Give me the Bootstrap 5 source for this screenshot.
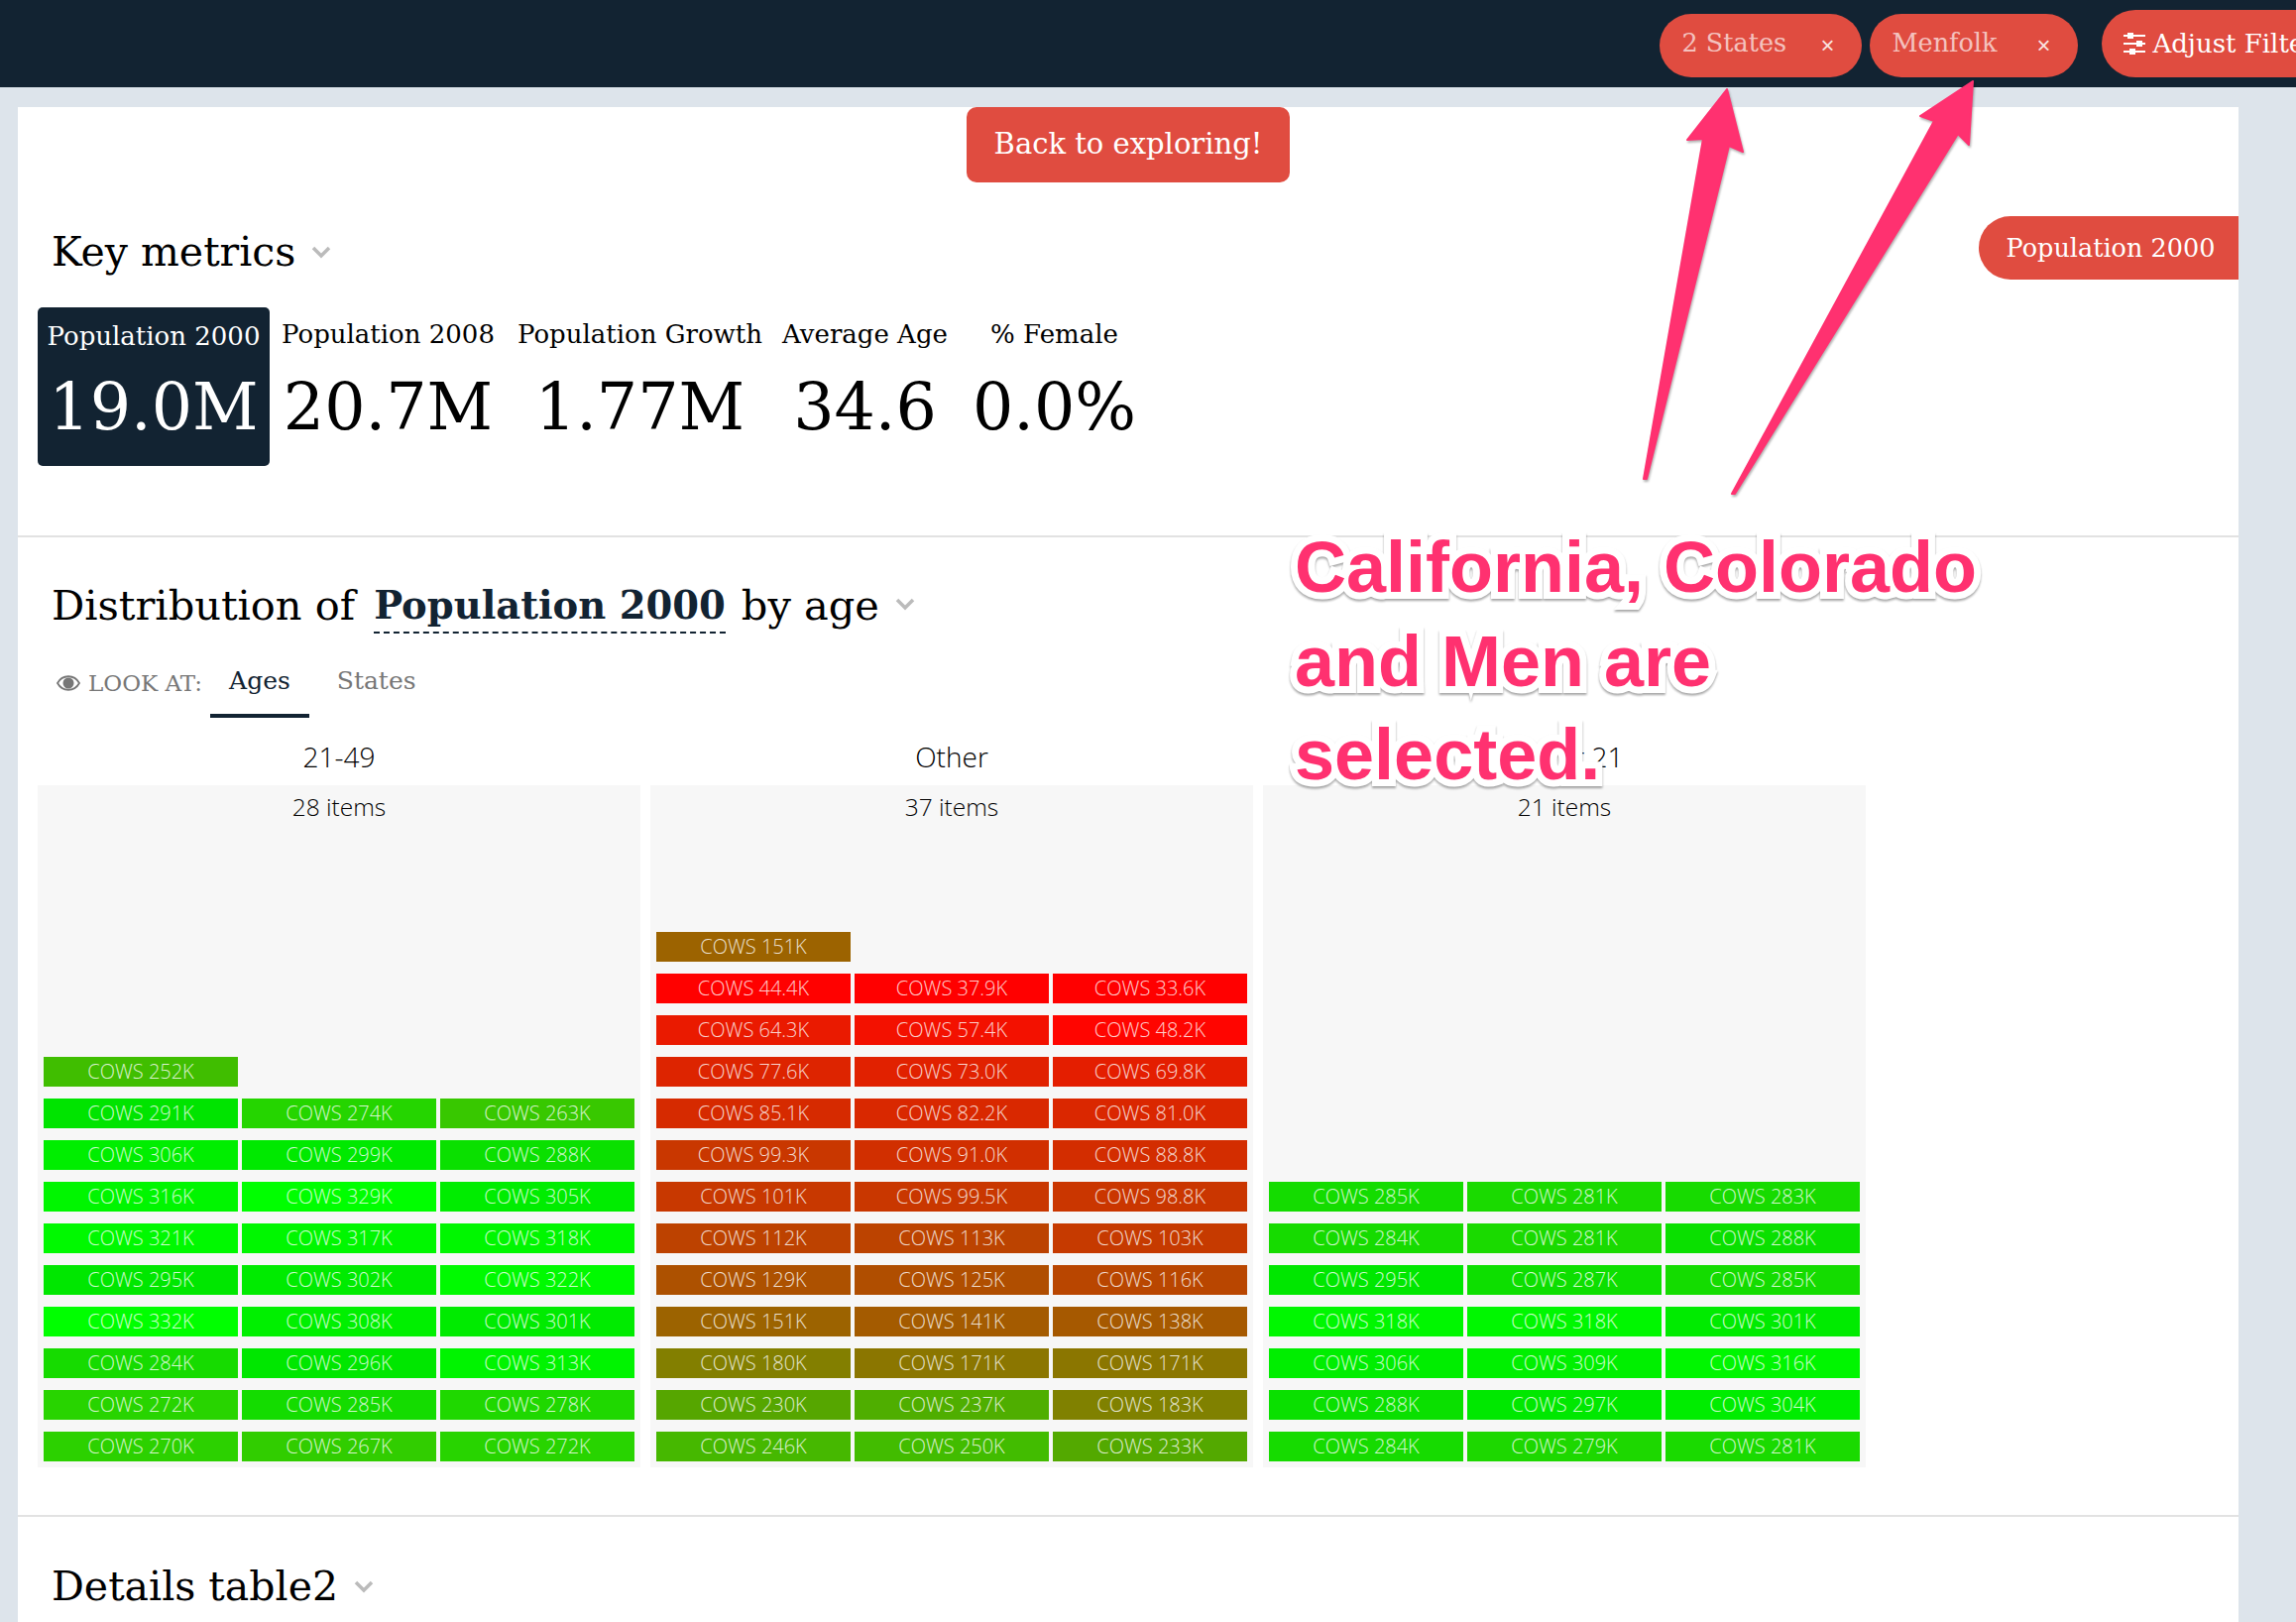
<!DOCTYPE html>
<html lang="en">
<head>
  <meta charset="UTF-8">
  <title>Population explorer</title>
  <link href="https://cdn.jsdelivr.net/npm/bootstrap@5.3.2/dist/css/bootstrap.min.css" rel="stylesheet">
  <style>
    html, body { height: 1636px; overflow: hidden; }
    body { background: #dde4eb; font-family: "DejaVu Serif", serif; color: #000; position: relative; }
    .top-bar { background: #122332; height: 88px; padding: 0; }
    .top-chips { margin-top: 14px; }
    .red-chip { background: #e04c40; color: #fff; border: 0; border-radius: 32px; font-size: 25.5px; height: 64px; padding-bottom: 6px; }
    .red-chip:hover { background: #e04c40; color: #fff; }
    .filter-chip { width: 204px; padding: 0 28px 6px 22px; color: rgba(255,255,255,.68); }
    .filter-chip.wide-chip { width: 210px; }
    .chip-x { font-family: "Liberation Sans", sans-serif; font-size: 24px; color: rgba(255,255,255,.85); padding-top: 6px; }
    .adjust-btn { height: 68px; margin: -4px -74px 0 16px; padding: 0 40px 0 21px; border-radius: 34px; white-space: nowrap; gap: 6px; font-size: 26px; }
    .sheet { background: #fff; margin: 20px 58px 0 18px; height: 1600px; }
    .back-btn { background: #e04c40; color: #fff; font-size: 29px; height: 76px; width: 326px; border-radius: 10px; border: 0; }
    .back-btn:hover { background: #e04c40; color: #fff; }
    .head-row { height: 64px; margin-top: 34px; padding-left: 34px; }
    .sec-title { font-size: 41px; font-weight: 400; margin: 0; line-height: 56px; padding-top: 8px; }
    .metric-pill { background: #e04c40; color: #fff; border-radius: 32px 0 0 32px; width: 262px; height: 64px; font-size: 25.5px; padding-left: 4px; }
    .metric-row { margin-top: 28px; padding-left: 20px; height: 160px; }
    .metric-tile { text-align: center; padding-top: 9px; white-space: nowrap; }
    .metric-tile.on { background: #122332; color: #fff; border-radius: 5px; padding-top: 11px; }
    .metric-tile.on .metric-num { margin-top: 16px; }
    .metric-tile:nth-child(1) { width: 234px; }
    .metric-tile:nth-child(2) { width: 239px; }
    .metric-tile:nth-child(3) { width: 269px; }
    .metric-tile:nth-child(4) { width: 185px; }
    .metric-tile:nth-child(5) { width: 197px; }
    .metric-name { font-size: 26px; line-height: 36px; }
    .metric-num { font-size: 65px; line-height: 76px; margin-top: 18px; }
    .sec-rule { height: 2px; background: #e2e2e2; margin-top: 70px; }
    .dist-head { height: 60px; margin-top: 37px; padding-left: 34px; font-size: 41.5px; line-height: 57px; }
    .dist-head span { padding-top: 3px; }
    .dist-measure { font-weight: 700; color: #122332; border-bottom: 2px dashed #122332; margin: 0 16px 0 19px; font-size: 38.5px; height: 60px; }
    .look-row { padding-left: 39px; height: 70px; margin-top: 15px; }
    .look-label { color: #777; font-size: 23px; gap: 8px; }
    .look-tabs { gap: 9px; }
    .look-tabs .nav-link { color: #777; font-size: 25px; padding: 0 19px; height: 70px; line-height: 66px; }
    .look-tabs .nav-link.active { color: #122332; border-bottom: 4px solid #122332; }
    .age-cols { padding-left: 20px; gap: 10px; margin-top: 19px; }
    .age-col { width: 608px; }
    .age-name { font-family: "Open Sans", sans-serif; font-weight: 300; font-size: 28px; text-align: center; height: 49px; line-height: 40px; }
    .age-panel { background: #f7f7f7; height: 688px; padding: 0 6px 6px; position: relative; }
    .item-count { font-family: "Open Sans", sans-serif; font-weight: 300; font-size: 24.5px; text-align: center; line-height: 44px; height: 44px; }
    .cow-row { gap: 4px; margin-top: 12px; }
    .cow-cell { width: 196px; height: 30px; line-height: 30px; text-align: center; color: rgba(255,255,255,.82); font-family: "Open Sans", sans-serif; font-weight: 300; font-size: 20px; white-space: nowrap; }
    .rule-two { margin-top: 48px; }
    .note-arrows { left: 0; top: 0; z-index: 10; filter: drop-shadow(1px 2px 1px rgba(0,0,0,.3)); }
    .note-text { left: 1306px; top: 525px; z-index: 11; font-family: "Liberation Sans", sans-serif; font-weight: 700; font-size: 72px; line-height: 94.5px; color: #ff3170; -webkit-text-stroke: 14px #fff; paint-order: stroke fill; filter: drop-shadow(0 2px 1px rgba(0,0,0,.35)); white-space: nowrap; }
  </style>
</head>
<body>
  <nav class="navbar top-bar d-flex justify-content-end align-items-start flex-nowrap">
    <div class="d-flex gap-2 align-items-start top-chips">
      <button class="btn red-chip filter-chip d-flex justify-content-between align-items-center" type="button"><span>2 States</span><span class="chip-x">×</span></button>
      <button class="btn red-chip filter-chip wide-chip d-flex justify-content-between align-items-center" type="button"><span>Menfolk</span><span class="chip-x">×</span></button>
      <button class="btn red-chip adjust-btn d-flex align-items-center" type="button">
        <svg width="24" height="22" viewBox="0 0 24 22"><g stroke="#fff" stroke-width="2"><path d="M1 3h22M1 11h22M1 19h22"/></g><g fill="#fff"><rect x="5" y="0" width="6" height="6"/><rect x="14" y="8" width="6" height="6"/><rect x="7" y="16" width="6" height="6"/></g></svg>
        <span>Adjust Filters</span>
      </button>
    </div>
  </nav>

  <main class="sheet">
    <div class="d-flex justify-content-center">
      <button class="btn back-btn" type="button">Back to exploring!</button>
    </div>

    <section>
      <div class="head-row d-flex justify-content-between align-items-center">
        <h2 class="sec-title d-flex align-items-center gap-3">Key metrics
          <svg width="20" height="13" viewBox="0 0 20 13"><path d="M2 2l8 8 8-8" fill="none" stroke="#bbb" stroke-width="3.5"/></svg>
        </h2>
        <div class="metric-pill d-flex align-items-center justify-content-center">Population 2000</div>
      </div>
      <div class="metric-row d-flex">
        <div class="metric-tile on"><div class="metric-name">Population 2000</div><div class="metric-num">19.0M</div></div>
        <div class="metric-tile"><div class="metric-name">Population 2008</div><div class="metric-num">20.7M</div></div>
        <div class="metric-tile"><div class="metric-name">Population Growth</div><div class="metric-num">1.77M</div></div>
        <div class="metric-tile"><div class="metric-name">Average Age</div><div class="metric-num">34.6</div></div>
        <div class="metric-tile"><div class="metric-name">% Female</div><div class="metric-num">0.0%</div></div>
      </div>
      <div class="sec-rule"></div>
    </section>

    <section>
      <div class="dist-head d-flex align-items-start">
        <span>Distribution of</span>
        <span class="dist-measure">Population 2000</span>
        <span>by age</span>
        <svg class="ms-3 mt-4" width="20" height="13" viewBox="0 0 20 13"><path d="M2 2l8 8 8-8" fill="none" stroke="#bbb" stroke-width="3.5"/></svg>
      </div>
      <div class="look-row d-flex align-items-center">
        <div class="look-label d-flex align-items-center">
          <svg width="24" height="16" viewBox="0 0 24 16"><path d="M1 8c5-9 17-9 22 0-5 9-17 9-22 0z" fill="none" stroke="#777" stroke-width="1.8"/><circle cx="12" cy="8" r="5.5" fill="#777"/></svg>
          <span>LOOK AT:</span>
        </div>
        <ul class="nav look-tabs ms-2">
          <li class="nav-item"><a class="nav-link active" href="#">Ages</a></li>
          <li class="nav-item"><a class="nav-link" href="#">States</a></li>
        </ul>
      </div>
      <div class="age-cols d-flex" id="ageCols"></div>
      <div class="sec-rule rule-two"></div>
    </section>

    <section>
      <div class="head-row d-flex align-items-center">
        <h2 class="sec-title d-flex align-items-center gap-3">Details table2
          <svg width="20" height="13" viewBox="0 0 20 13"><path d="M2 2l8 8 8-8" fill="none" stroke="#bbb" stroke-width="3.5"/></svg>
        </h2>
      </div>
    </section>
  </main>

  <svg class="note-arrows position-absolute" width="2316" height="600" viewBox="0 0 2316 600">
    <g fill="#ff3170" stroke="#ff3170" stroke-width="2" stroke-linejoin="round">
      <polygon points="1742,90 1702,141 1718,140 1658,483 1661,483 1744,147 1758,153"/>
      <polygon points="1990,82 1937,117 1951,122 1747,498 1750,498 1975,135 1986,146"/>
    </g>
  </svg>
  <div class="note-text position-absolute">California, Colorado<br>and Men are<br>selected.</div>

  <script>
    const columns = [
      { name: '21-49', count: '28 items', rows: [
        [252], [291, 274, 263], [306, 299, 288], [316, 329, 305], [321, 317, 318],
        [295, 302, 322], [332, 308, 301], [284, 296, 313], [272, 285, 278], [270, 267, 272]] },
      { name: 'Other', count: '37 items', rows: [
        [151], [44.4, 37.9, 33.6], [64.3, 57.4, 48.2], [77.6, 73.0, 69.8], [85.1, 82.2, 81.0],
        [99.3, 91.0, 88.8], [101, 99.5, 98.8], [112, 113, 103], [129, 125, 116], [151, 141, 138],
        [180, 171, 171], [230, 237, 183], [246, 250, 233]] },
      { name: 'Under 21', count: '21 items', rows: [
        [285, 281, 283], [284, 281, 288], [295, 287, 285], [318, 318, 301],
        [306, 309, 316], [288, 297, 304], [284, 279, 281]] }
    ];

    // colour stops read off the picture: value -> channel
    const redStops = [[48, 255], [64, 234], [85, 214], [101, 200], [125, 176], [151, 156], [180, 131], [230, 86], [250, 66], [263, 56], [272, 40], [285, 20], [291, 0]];
    const greenStops = [[44, 0], [64, 26], [85, 42], [101, 56], [125, 78], [151, 99], [180, 127], [230, 166], [250, 188], [263, 200], [272, 212], [285, 220], [291, 228], [306, 238], [316, 246], [329, 255]];

    function lerp(stops, v) {
      if (v <= stops[0][0]) return stops[0][1];
      for (let i = 1; i < stops.length; i++) {
        if (v <= stops[i][0]) {
          const [a, b] = [stops[i - 1], stops[i]];
          return Math.round(a[1] + (b[1] - a[1]) * (v - a[0]) / (b[0] - a[0]));
        }
      }
      return stops[stops.length - 1][1];
    }

    function label(v) {
      return 'COWS ' + (v < 100 ? v.toFixed(1) : v) + 'K';
    }

    document.getElementById('ageCols').innerHTML = columns.map(col => `
      <div class="age-col">
        <div class="age-name">${col.name}</div>
        <div class="age-panel d-flex flex-column">
          <div class="item-count">${col.count}</div>
          <div class="mt-auto">
            ${col.rows.map(row => `<div class="cow-row d-flex">${row.map(v =>
              `<div class="cow-cell" style="background: rgb(${lerp(redStops, v)}, ${lerp(greenStops, v)}, 0)">${label(v)}</div>`).join('')}</div>`).join('')}
          </div>
        </div>
      </div>`).join('');
  </script>
  <script src="https://cdn.jsdelivr.net/npm/bootstrap@5.3.2/dist/js/bootstrap.bundle.min.js"></script>
</body>
</html>
